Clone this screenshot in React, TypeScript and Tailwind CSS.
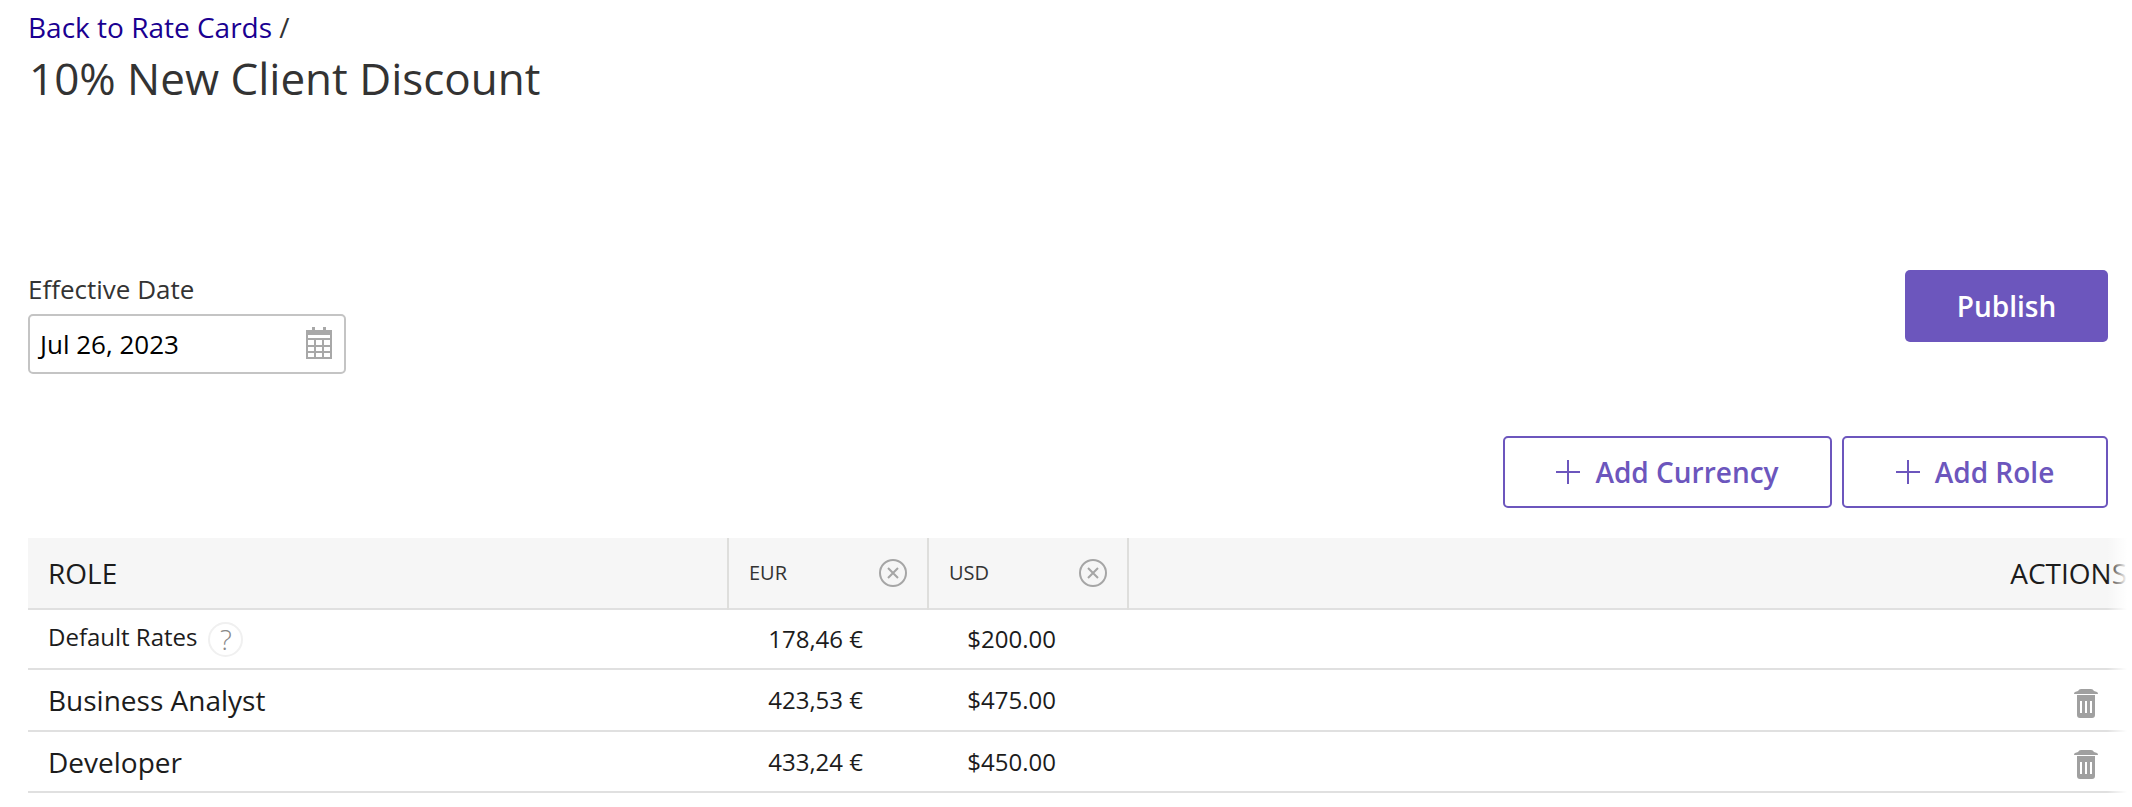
/**
 * Rate card detail page
 */

const rows = [
  { role: 'Business Analyst', eur: '423,53 €', usd: '$475.00', rowClass: 'h-[62px]' },
  { role: 'Developer', eur: '433,24 €', usd: '$450.00', rowClass: 'h-[61px]' },
];

function CalendarIcon() {
  return (
    <svg width="26" height="32" viewBox="0 0 26 32" className="text-[#a8a8a8]">
      <path fill="currentColor" d="M6 0h3v3h8V0h3v3h6v29H0V3h6z" />
      <path
        fill="#fff"
        d="M2 8h22v3H2zM2 13h6v5H2zM10 13h6v5h-6zM18 13h6v5h-6zM2 20h6v4H2zM10 20h6v4h-6zM18 20h6v4h-6zM2 26h6v4H2zM10 26h6v4h-6zM18 26h6v4h-6z"
      />
    </svg>
  );
}

function PlusIcon() {
  return (
    <svg width="24" height="24" viewBox="0 0 24 24" stroke="currentColor" strokeWidth="2">
      <path d="M12 0v24M0 12h24" />
    </svg>
  );
}

function CloseCircle() {
  return (
    <svg width="28" height="28" viewBox="0 0 28 28" fill="none" stroke="#a6a6a6" strokeWidth="2">
      <circle cx="14" cy="14" r="13" />
      <path d="M9 9l10 10M19 9L9 19" />
    </svg>
  );
}

function TrashIcon() {
  return (
    <svg width="24" height="29" viewBox="0 0 24 29" className="text-[#a0a0a0]">
      <path fill="currentColor" d="M7 0h10q2 0 3 2l3 1q1 .5 1 2H0q0-1.500 1-2l3-1q1-2 3-2z" />
      <path
        fill="currentColor"
        fillRule="evenodd"
        d="M3 6h18v20q0 3-3 3H6q-3 0-3-3zM6 12v12h2V12zM11 12v12h2V12zM16 12v12h2V12z"
      />
    </svg>
  );
}

export default function App() {
  return (
    <div className="h-[807px] overflow-hidden bg-white pl-7 font-['Open_Sans',sans-serif] text-[#333]">
      <div className="pr-6">
        <div className="pt-[8px] text-[28px] leading-[38px]">
          <a className="text-[#1a0091]">Back to Rate Cards</a> <span>/</span>
        </div>
        <h1 className="mt-[5px] ml-[1px] text-[44px] leading-[54px] font-normal">10% New Client Discount</h1>

        <div className="mt-[168px] flex items-start justify-between">
          <div>
            <label className="block text-[26px] leading-[33px]">Effective Date</label>
            <div className="mt-[8px] flex h-[60px] w-[318px] items-center justify-between rounded-[5px] border-2 border-[#c4c4c4] pr-[12px] pl-[10px] text-[26px] text-black">
              <span>Jul 26, 2023</span>
              <span className="mt-[-2px] flex">
                <CalendarIcon />
              </span>
            </div>
          </div>
          <button className="mt-[-3px] h-[72px] w-[203px] rounded-[5px] bg-[#6c56bd] text-[28px] font-semibold text-white">
            Publish
          </button>
        </div>

        <div className="mt-[62px] flex justify-end gap-[10px]">
          <button className="flex h-[72px] w-[329px] items-center justify-center gap-[15px] rounded-[5px] border-2 border-[#6c56bd] text-[28px] font-semibold text-[#6c56bd]">
            <PlusIcon />
            Add Currency
          </button>
          <button className="flex h-[72px] w-[266px] items-center justify-center gap-[15px] rounded-[5px] border-2 border-[#6c56bd] text-[28px] font-semibold text-[#6c56bd]">
            <PlusIcon />
            Add Role
          </button>
        </div>
      </div>

      <div className="relative mt-[30px] w-[2099px] overflow-hidden">
        <table className="w-[2130px] table-fixed border-collapse text-[#1c1c1c]">
          <colgroup>
            <col className="w-[700px]" />
            <col className="w-[200px]" />
            <col className="w-[200px]" />
            <col />
          </colgroup>
          <thead>
            <tr className="h-[71px] border-b-2 border-[#e0e0e0] bg-[#f6f6f6]">
              <th className="border-r-2 border-[#dededc] pl-5 text-left text-[28px] font-normal">ROLE</th>
              <th className="border-r-2 border-[#dededc] px-5 text-left text-[20px] font-normal text-[#333]">
                <div className="flex items-center justify-between">
                  EUR
                  <CloseCircle />
                </div>
              </th>
              <th className="border-r-2 border-[#dededc] px-5 text-left text-[20px] font-normal text-[#333]">
                <div className="flex items-center justify-between">
                  USD
                  <CloseCircle />
                </div>
              </th>
              <th className="pr-[31px] text-right text-[28px] font-normal">ACTIONS</th>
            </tr>
          </thead>
          <tbody className="text-[24px]">
            <tr className="h-[60px] border-b-2 border-[#e0e0e0]">
              <td className="pl-5 text-[24px]">
                <div className="flex items-center gap-[11px]">
                  <span className="mt-[-4px]">Default Rates</span>
                  <span className="flex h-[35px] w-[35px] items-center justify-center rounded-full border-2 border-[#f0f0f0] text-[28px] font-light text-[#888]">
                    ?
                  </span>
                </div>
              </td>
              <td className="pr-[65px] text-right">178,46 €</td>
              <td className="pr-[72px] text-right">$200.00</td>
              <td />
            </tr>
            {rows.map((r) => (
              <tr key={r.role} className={`${r.rowClass} border-b-2 border-[#e0e0e0]`}>
                <td className="pl-5 text-[28px]">{r.role}</td>
                <td className="pr-[65px] text-right">{r.eur}</td>
                <td className="pr-[72px] text-right">{r.usd}</td>
                <td>
                  <div className="mt-[6px] flex justify-end pr-[60px]">
                    <TrashIcon />
                  </div>
                </td>
              </tr>
            ))}
          </tbody>
        </table>
        <div className="absolute top-0 right-0 bottom-0 w-[20px] bg-gradient-to-r from-white/0 to-white" />
      </div>
    </div>
  );
}
